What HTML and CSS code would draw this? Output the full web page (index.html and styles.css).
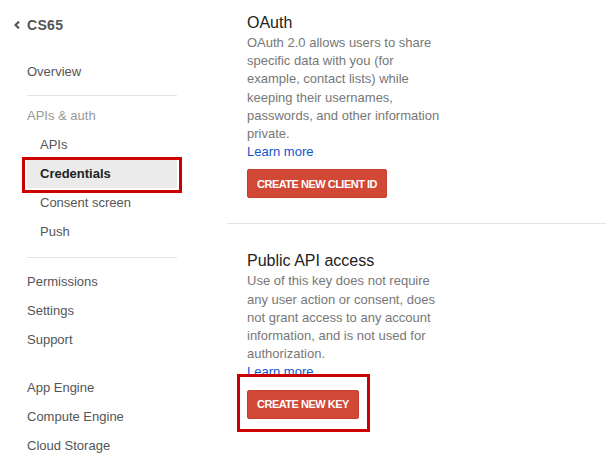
FILE: index.html
```html
<!DOCTYPE html>
<html>
<head>
<meta charset="utf-8">
<link rel="stylesheet" href="styles.css">
</head>
<body>
<div class="page">
  <aside class="sidebar">
    <div class="project">
      <svg class="back" width="6" height="8" viewBox="0 0 6 8"><path d="M5 0.6 L1.5 4 L5 7.4" fill="none" stroke="#555" stroke-width="2.2"/></svg>
      <span class="project-name">CS65</span>
    </div>
    <nav class="nav">
      <a class="nav-item">Overview</a>
      <div class="nav-divider"></div>
      <div class="nav-group">APIs &amp; auth</div>
      <a class="nav-item sub">APIs</a>
      <a class="nav-item sub active">Credentials</a>
      <a class="nav-item sub">Consent screen</a>
      <a class="nav-item sub">Push</a>
      <div class="nav-divider second"></div>
      <a class="nav-item">Permissions</a>
      <a class="nav-item">Settings</a>
      <a class="nav-item">Support</a>
      <div class="nav-gap"></div>
      <a class="nav-item">App Engine</a>
      <a class="nav-item">Compute Engine</a>
      <a class="nav-item">Cloud Storage</a>
    </nav>
  </aside>
  <main class="content">
    <section class="section first">
      <h2 class="section-title">OAuth</h2>
      <p class="section-desc">OAuth 2.0 allows users to share specific data with you (for example, contact lists) while keeping their usernames, passwords, and other information private.</p>
      <a class="learn-more">Learn more</a>
      <button class="btn">CREATE NEW CLIENT ID</button>
    </section>
    <section class="section second">
      <h2 class="section-title">Public API access</h2>
      <p class="section-desc">Use of this key does not require any user action or consent, does not grant access to any account information, and is not used for authorization.</p>
      <a class="learn-more">Learn more</a>
      <span class="callout"><button class="btn">CREATE NEW KEY</button></span>
    </section>
  </main>
</div>
</body>
</html>
```
FILE: styles.css
```css
html, body {
  margin: 0;
  padding: 0;
  background: #fff;
}
body {
  font-family: "Liberation Sans", Arial, sans-serif;
  font-size: 13px;
  color: #555;
}
.page {
  display: flex;
  align-items: flex-start;
}
.sidebar {
  width: 227px;
  flex: none;
}
.project {
  height: 50px;
  display: flex;
  align-items: center;
  padding-left: 14px;
  gap: 7px;
}
.back {
  display: block;
}
.project-name {
  font-size: 14px;
  font-weight: bold;
  color: #555;
  letter-spacing: 0.3px;
}
.nav {
  display: flex;
  flex-direction: column;
  margin-top: 7px;
  margin-left: 27px;
  width: 150px;
}
.nav-item, .nav-group {
  display: block;
  height: 29px;
  line-height: 29px;
  color: #555;
  text-decoration: none;
  white-space: nowrap;
}
.nav-group {
  color: #999;
}
.nav-item.sub {
  padding-left: 13px;
}
.nav-item.active {
  position: relative;
  background: #ebebeb;
  color: #222;
  font-weight: bold;
  border-radius: 2px;
}
.nav-item.active::after {
  content: "";
  position: absolute;
  top: -2px;
  left: -5px;
  right: -5px;
  bottom: -5px;
  border: 3px solid #cc0000;
}
.nav-divider {
  height: 1px;
  background: #e5e5e5;
  margin: 9px 0 5px;
}
.nav-divider.second {
  margin: 11px 0 9px;
}
.nav-gap {
  height: 19px;
}
.content {
  flex: 1;
}
.section {
  padding: 12px 20px 25px;
}
.section.first {
  border-bottom: 1px solid #e5e5e5;
}
.section.second {
  padding-top: 26px;
}
.section-title {
  margin: 0;
  font-size: 16px;
  font-weight: normal;
  line-height: 22px;
  color: #222;
}
.section-desc {
  margin: 0;
  width: 200px;
  line-height: 18.2px;
  color: #777;
}
.learn-more {
  display: block;
  line-height: 18.2px;
  color: #1155cc;
  text-decoration: none;
}
.btn {
  display: block;
  margin-top: 8px;
  height: 29px;
  padding: 0 9px;
  border: 1px solid #c6412f;
  border-radius: 2px;
  background: #d14836;
  color: #fff;
  font-family: "Liberation Sans", Arial, sans-serif;
  font-size: 11px;
  font-weight: bold;
  letter-spacing: -0.5px;
}
.callout {
  position: relative;
  display: inline-block;
  margin-top: 8px;
}
.callout .btn {
  margin-top: 0;
}
.callout::after {
  content: "";
  position: absolute;
  top: -16px;
  left: -10px;
  right: -11px;
  bottom: -13px;
  border: 3px solid #cc0000;
}
```
